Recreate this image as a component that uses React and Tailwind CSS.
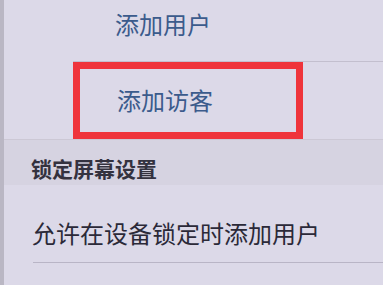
const font = { fontFamily: '"Noto Sans CJK SC", "Noto Sans", sans-serif' };

export default function App() {
  return (
    <div className="w-[383px] h-[285px] overflow-hidden flex bg-[#dcd9e8]" style={font}>
      <div className="w-[4px] shrink-0 bg-[#bab7c4]" />
      <div className="flex-1 flex flex-col">
        <div className="h-[62px] pl-[111px] pt-[9px] relative">
          <span className="text-[24px] leading-[30px] text-[#3b5b8c]">添加用户</span>
          <div className="absolute bottom-0 left-[69px] right-0 h-px bg-[#c3bfce]" />
        </div>

        <div className="h-[77px] relative pl-[113px] pt-[23px]">
          <span className="text-[24px] leading-[30px] text-[#3b5b8c]">添加访客</span>
          <div className="absolute left-[69px] top-0 w-[230px] h-[77px] border-[7px] border-[#ef343b]" />
        </div>

        <div className="h-[46px] bg-[#d6d3e1] pl-[27px] pt-[15px] border-t border-[#ccc8d5]">
          <span className="text-[21px] leading-[26px] font-bold text-[#34323f]">锁定屏幕设置</span>
        </div>

        <div className="h-[78px] pl-[28px] pt-[32px] relative">
          <span className="text-[24px] leading-[32px] text-[#2b2938]">允许在设备锁定时添加用户</span>
          <div className="absolute bottom-0 left-[29px] right-0 h-px bg-[#b9b5c6]" />
        </div>

        <div className="flex-1" />
      </div>
    </div>
  );
}
